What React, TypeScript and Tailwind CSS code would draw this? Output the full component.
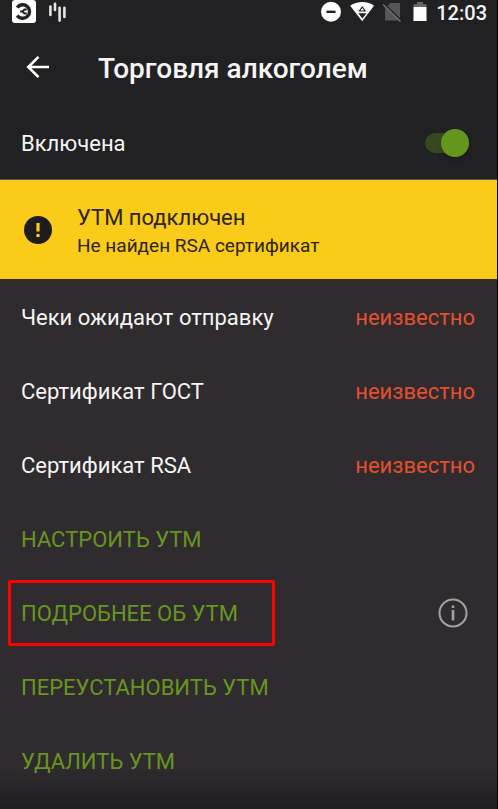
import React, { useState } from 'react'

const statuses = [
  { label: 'Чеки ожидают отправку', value: 'неизвестно' },
  { label: 'Сертификат ГОСТ', value: 'неизвестно' },
  { label: 'Сертификат RSA', value: 'неизвестно' },
]

const actions = [
  { label: 'НАСТРОИТЬ УТМ' },
  { label: 'ПОДРОБНЕЕ ОБ УТМ', highlighted: true, info: true },
  { label: 'ПЕРЕУСТАНОВИТЬ УТМ' },
  { label: 'УДАЛИТЬ УТМ' },
]

const StatusBar = () => {
  return (
    <div className="flex h-6 items-center justify-between pl-3 pr-2.5">
      <div className="flex items-center gap-3">
        <svg width="24" height="24" viewBox="0 0 24 24" fill="none">
          <rect width="24" height="23" rx="3" fill="#fff" />
          <path d="M5.2 7.6A6.8 6.8 0 1 1 5.2 15.4" stroke="#212123" strokeWidth="3.4" />
          <path d="M8.2 11.5H11M14.8 9.6H12.4L10.6 11.5L12.4 13.4H14.8" stroke="#212123" strokeWidth="2" />
        </svg>
        <svg width="18" height="24" viewBox="0 0 18 24" stroke="#e4e4e4" strokeWidth="2.6" strokeLinecap="round">
          <path d="M2.4 6.5V15M7 3.8V10M11.6 7.8V20.6M16.4 7.8V17" />
        </svg>
      </div>
      {/* ---------- Right side ---------- */}
      <div className="flex items-center">
        <svg width="114" height="24" viewBox="0 0 114 24">
          <circle cx="10" cy="11.8" r="10" fill="#fff" />
          <path d="M5.5 11.8H14.5" stroke="#212123" strokeWidth="2.4" />
          <path d="M29.2 5.8C36 .8 47 .8 53 5.8L41.2 21.2Z" fill="#fff" />
          <path d="M41.3 7L44.2 11H38.4Z" fill="#fff" stroke="#212123" strokeWidth="1.2" />
          <path d="M37.2 13.2H45.6L41.4 18.4Z" fill="#212123" />
          <path d="M69.5 3H79V20.5H64V8.5Z" fill="#565658" />
          <path d="M62.5 3.5L81 21.5" stroke="#212123" strokeWidth="2" />
          <path d="M62 4.5L79.5 21.5" stroke="#727274" strokeWidth="1.4" />
          <path d="M92.5 7V4.2H96V2H102V4.2H105.5V7Z" fill="#69696b" />
          <path d="M92.5 7H105.5V21H92.5Z" fill="#fff" />
        </svg>
        <time className="pt-px pl-px text-xl leading-6 font-medium">12:03</time>
      </div>
    </div>
  )
}

const App = () => {
  const [enabled, setEnabled] = useState(true)

  return (
    <div className="flex min-h-screen flex-col border-r border-black bg-[#2f2b2e] font-['Roboto',sans-serif] text-[22px] leading-7 text-[#f5f5f5]">
      {/* ---------- Header ---------- */}
      <header className="border-b border-[#5a5548] bg-[#212123]">
        <StatusBar />
        <div className="flex h-[86px] items-center pl-6">
          <button type="button" aria-label="Назад" className="mr-[46px]">
            <svg width="28" height="28" viewBox="0 0 28 28" fill="none" stroke="#fff" strokeWidth="2.6">
              <path d="M25 14H4.5M14.5 3.8L4.3 14L14.5 24.2" />
            </svg>
          </button>
          <h1 className="pt-1 text-[28px] leading-8 font-medium">Торговля алкоголем</h1>
        </div>
        <label className="flex h-[69px] items-center justify-between pb-1 pl-[21px] pr-7">
          <span className="pt-0.5">Включена</span>
          <input
            type="checkbox"
            role="switch"
            checked={enabled}
            onChange={(e) => setEnabled(e.target.checked)}
            className="flex h-5 w-11 appearance-none items-center rounded-full bg-[#4a4a4c] before:size-7 before:shrink-0 before:rounded-full before:bg-[#bdbdbd] before:shadow-md checked:justify-end checked:bg-[#364721] checked:before:bg-[#64961e]"
          />
        </label>
      </header>

      {/* ---------- Warning ---------- */}
      <section className="flex h-[99px] items-center bg-[#facb19] pl-6 text-[#2b2417]">
        <svg className="mr-[25px]" width="28" height="28" viewBox="0 0 28 28">
          <circle cx="14" cy="14" r="14" fill="#211c1c" />
          <path d="M12.4 7H15.6V15.5H12.4ZM12.4 18H15.6V21H12.4Z" fill="#facb19" />
        </svg>
        <div className="pt-1">
          <h2>УТМ подключен</h2>
          <p className="text-[19px]">Не найден RSA сертификат</p>
        </div>
      </section>

      {/* ---------- Statuses ---------- */}
      <main className="grow bg-linear-to-t from-[#201f21] to-[#2f2b2e] to-8% pt-px">
        <dl>
          {statuses.map((item) => (
            <div key={item.label} className="flex h-[74px] items-center justify-between pt-0.5 pl-[21px] pr-[22px]">
              <dt>{item.label}</dt>
              <dd className="text-[#e2502f]">{item.value}</dd>
            </div>
          ))}
        </dl>

        {/* ---------- Actions ---------- */}
        <ul>
          {actions.map((item) => (
            <li key={item.label} className="relative flex h-[74px] items-center justify-between pl-[21px] pr-[29px]">
              <button type="button" className="pt-0.5 text-[#679620]">
                {item.label}
              </button>
              {item.info && (
                <button type="button" aria-label="Информация">
                  <svg width="30" height="30" viewBox="0 0 30 30" fill="none" stroke="#a5a2a4" strokeWidth="2">
                    <circle cx="15" cy="15" r="13.5" />
                    <path d="M15 12V22.5M15 7.5V10" strokeWidth="2.6" />
                  </svg>
                </button>
              )}
              {item.highlighted && (
                <span className="pointer-events-none absolute inset-y-1 left-2 w-[267px] rounded-xs border-3 border-[#ff0000]" />
              )}
            </li>
          ))}
        </ul>
      </main>
    </div>
  )
}

export default App
